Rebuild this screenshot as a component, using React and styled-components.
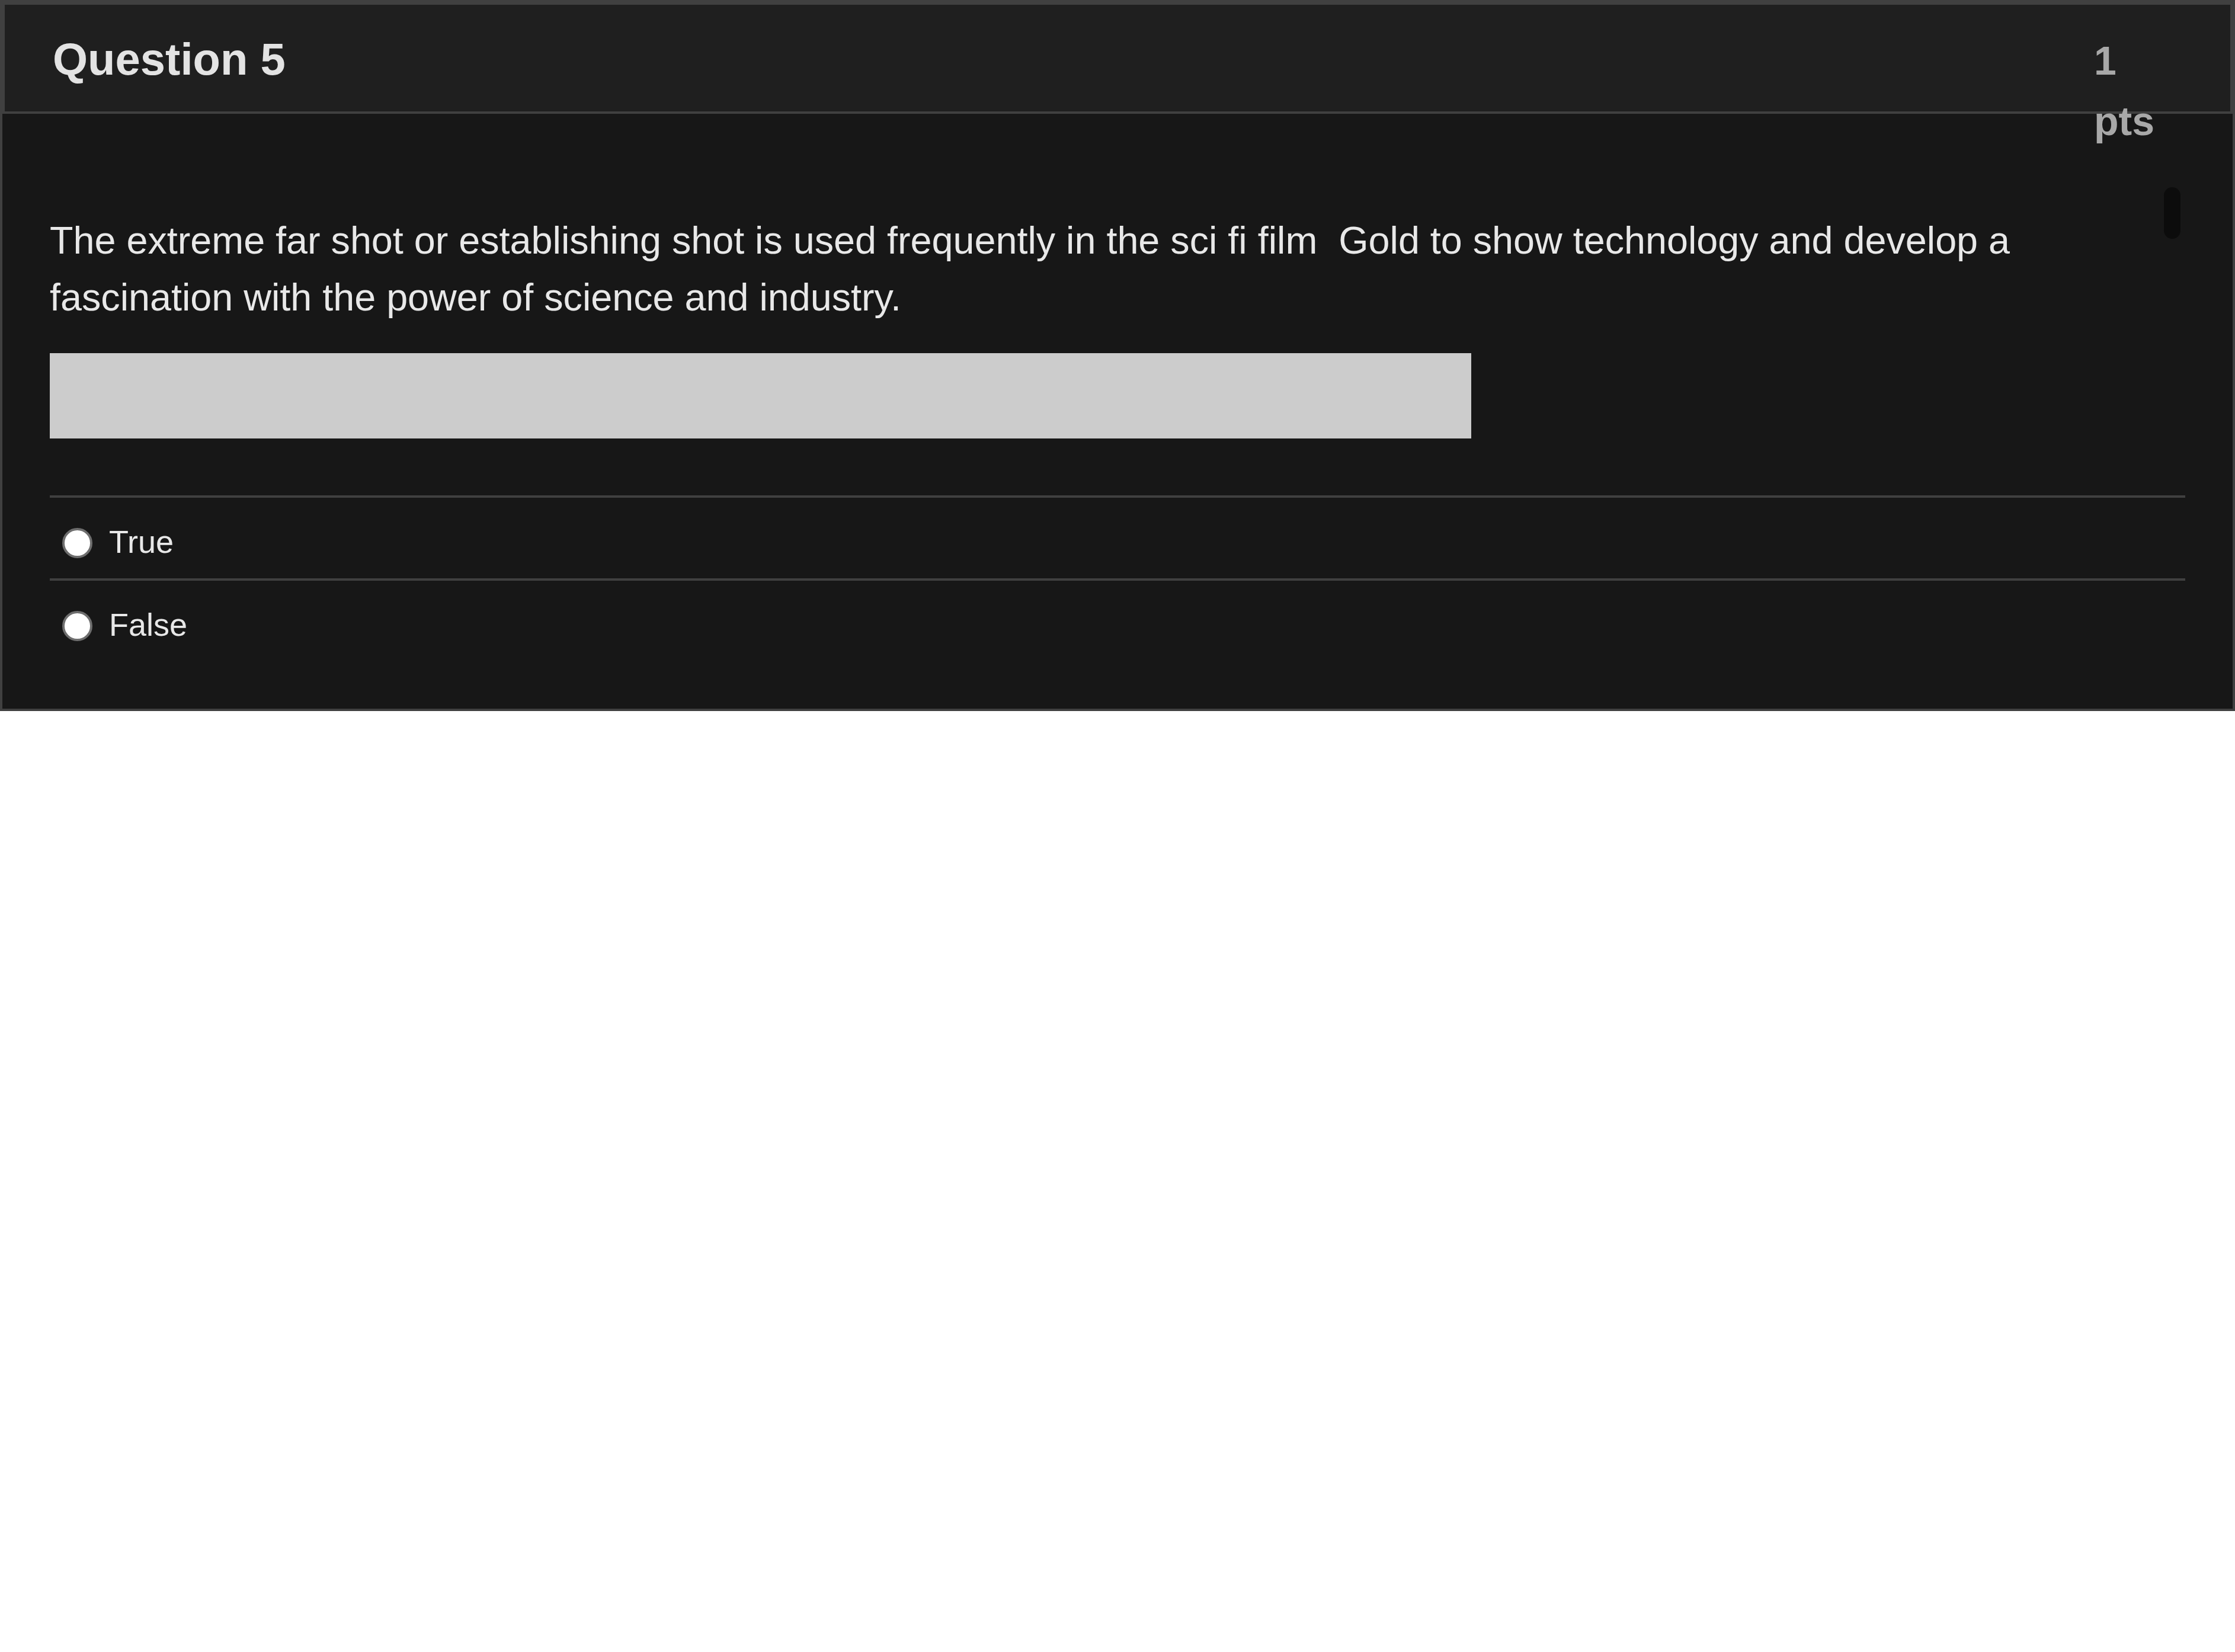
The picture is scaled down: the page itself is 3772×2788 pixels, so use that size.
import styled, { createGlobalStyle } from "styled-components";

const GlobalStyle = createGlobalStyle`
  html, body {
    margin: 0;
    padding: 0;
    background: #ffffff;
  }
  * {
    box-sizing: border-box;
  }
`;

export default function App() {
  return (
    <>
      <GlobalStyle />
      <Card>
        <Header>
          <Title>Question 5</Title>
          <Points>1 pts</Points>
        </Header>
        <Body>
          <Thumb />
          <QuestionText>
            The extreme far shot or establishing shot is used frequently in the sci fi film&nbsp; Gold to show technology and develop a fascination with the power of science and industry.
          </QuestionText>
          <Blank />
          <Answers>
            <Answer>
              <Radio />
              <Label>True</Label>
            </Answer>
            <Answer>
              <Radio />
              <Label>False</Label>
            </Answer>
          </Answers>
        </Body>
      </Card>
    </>
  );
}

const Card = styled.div`
  width: 100%;
  background-color: #171717;
  border-left: 4px solid #404040;
  border-right: 4px solid #404040;
  border-bottom: 4px solid #404040;
  font-family: "Liberation Sans", Arial, sans-serif;
`;

const Header = styled.div`
  height: 192px;
  display: flex;
  justify-content: space-between;
  align-items: baseline;
  padding: 40px 80px 0 81px;
  margin: 0 -4px;
  background-color: #1f1f1f;
  border-top: 8px solid #404040;
  border-left: 8px solid #404040;
  border-right: 8px solid #404040;
  border-bottom: 4px solid #404040;
`;

const Title = styled.h2`
  margin: 0;
  font-size: 76px;
  line-height: 104px;
  font-weight: bold;
  color: #e3e3e3;
`;

const Points = styled.div`
  width: 150px;
  font-size: 68px;
  line-height: 102px;
  font-weight: bold;
  color: #a8a8a8;
`;

const Body = styled.div`
  position: relative;
  padding: 166px 80px 80px 80px;
`;

const Thumb = styled.div`
  position: absolute;
  top: 124px;
  right: 88px;
  width: 28px;
  height: 87px;
  border-radius: 14px;
  background-color: #0c0c0c;
`;

const QuestionText = styled.p`
  margin: 0;
  max-width: 3540px;
  font-size: 64.7px;
  line-height: 96px;
  color: #e8e8e8;
`;

const Blank = styled.div`
  width: 2399px;
  height: 144px;
  margin-top: 46px;
  background-color: #cccccc;
`;

const Answers = styled.div`
  margin-top: 96px;
  display: flex;
  flex-direction: column;
`;

const Answer = styled.div`
  height: 140px;
  display: flex;
  align-items: center;
  gap: 28px;
  padding: 11px 0 0 21px;
  border-top: 4px solid #404040;
`;

const Radio = styled.span`
  width: 51px;
  height: 51px;
  margin-top: 6px;
  border-radius: 50%;
  background-color: #ffffff;
  border: 4px solid #6e6e6e;
  flex-shrink: 0;
`;

const Label = styled.span`
  font-size: 54px;
  color: #e8e8e8;
`;
